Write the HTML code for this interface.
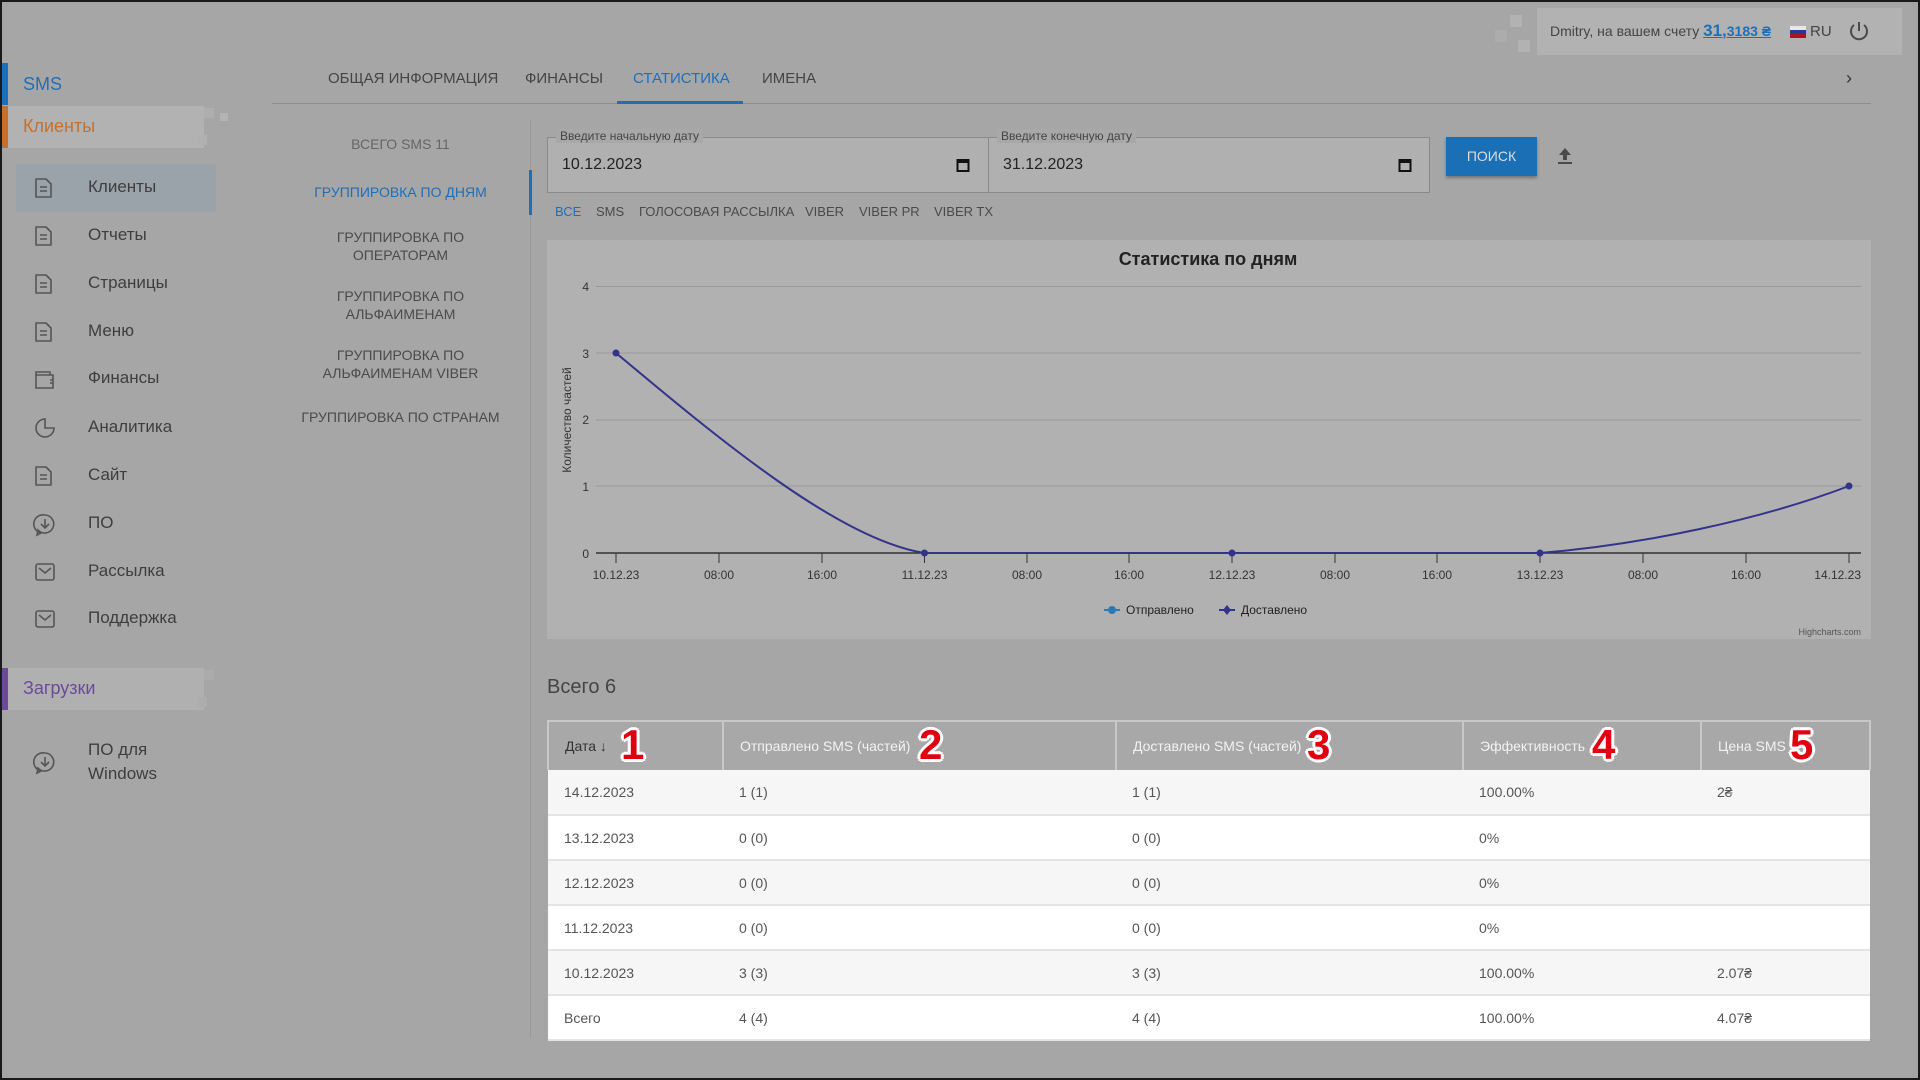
<!DOCTYPE html>
<html><head><meta charset="utf-8"><style>
*{box-sizing:border-box;margin:0;padding:0}
body{width:1920px;height:1080px;background:#a6a6a6;font-family:"Liberation Sans",sans-serif;position:relative;overflow:hidden;color:#444}
.frame{position:absolute;inset:0;border:2px solid #1a1a1a;pointer-events:none;z-index:10}
.a{position:absolute;white-space:nowrap}
.nav{position:absolute;left:88px;font-size:17px;color:#3e3e3e}
.ic{position:absolute;left:33px}
.sub{position:absolute;left:272px;width:257px;text-align:center;font-size:14px;color:#4a4a4a;line-height:18px}
.tab{position:absolute;top:70px;font-size:15px;color:#444}
.ft{position:absolute;top:204px;font-size:13px;color:#4a4a4a}
table{position:absolute;left:547px;top:720px;width:1324px;border-collapse:collapse;font-size:14px}
th{background:#a8a8a8;color:#f2f2f2;font-weight:normal;text-align:left;height:49px;padding-left:16px;border-left:2px solid #c8c8c8;border-top:2px solid #c8c8c8;position:relative}
th:first-child{color:#333;border-left:2px solid #c8c8c8}
th:last-child{border-right:2px solid #c8c8c8}
td{height:45px;padding-left:16px;color:#555;border-bottom:2px solid #e4e4e4}
tr.g td{background:#f6f6f6}
tr.w td{background:#fff}
.n{position:absolute;top:-1px;font-size:42px;font-weight:bold;color:#e00010;text-shadow:2px 0 #fff,-2px 0 #fff,0 2px #fff,0 -2px #fff,2px 2px #fff,-2px -2px #fff,2px -2px #fff,-2px 2px #fff,3px 0 #fff,-3px 0 #fff,0 3px #fff,0 -3px #fff}
</style></head><body>
<div class="frame"></div>

<div class="a" style="left:1537px;top:8px;width:365px;height:47px;background:#b2b2b2"></div>
<div class="a" style="left:1510px;top:15px;width:12px;height:12px;background:#b2b2b2"></div>
<div class="a" style="left:1495px;top:30px;width:12px;height:12px;background:#acacac"></div>
<div class="a" style="left:1518px;top:40px;width:12px;height:12px;background:#b2b2b2"></div>
<div class="a" style="left:1550px;top:21px;font-size:14px;color:#444">Dmitry, на вашем счету <span style="color:#1f6fb8;font-weight:bold;text-decoration:underline"><span style="font-size:17px">31,</span>3183 ₴</span></div>
<div class="a" style="left:1790px;top:26px;width:16px;height:12px;background:linear-gradient(#e8e8e8 33%,#1f3a9a 33% 66%,#b01020 66%)"></div>
<div class="a" style="left:1810px;top:23px;font-size:15px;color:#444">RU</div>
<svg class="a" style="left:1848px;top:20px" width="22" height="22" viewBox="0 0 22 22"><path d="M6 5a8 8 0 1 0 10 0M11 2v9" fill="none" stroke="#4a4a4a" stroke-width="2"/></svg>

<div class="a" style="left:2px;top:63px;width:6px;height:42px;background:#1f6fb8"></div>
<div class="a" style="left:23px;top:74px;font-size:18px;color:#1f6fb8">SMS</div>
<div class="a" style="left:2px;top:106px;width:202px;height:42px;background:#b2b2b2;border-left:6px solid #c6702e"></div>
<div class="a" style="left:204px;top:108px;width:10px;height:10px;background:#aeaeae"></div>
<div class="a" style="left:220px;top:113px;width:8px;height:8px;background:#b4b4b4"></div>
<div class="a" style="left:197px;top:135px;width:10px;height:10px;background:#b0b0b0"></div>
<div class="a" style="left:23px;top:116px;font-size:18px;color:#c6702e">Клиенты</div>
<div class="a" style="left:16px;top:164px;width:200px;height:48px;background:#9aa2aa"></div>

<div class="a" style="left:2px;top:668px;width:202px;height:42px;background:#b0b0b0;border-left:6px solid #6b4a9c"></div>
<div class="a" style="left:204px;top:670px;width:10px;height:10px;background:#ababab"></div>
<div class="a" style="left:197px;top:697px;width:10px;height:10px;background:#adadad"></div>
<div class="a" style="left:23px;top:678px;font-size:18px;color:#6b4a9c">Загрузки</div>

<div class="nav" style="top:177px">Клиенты</div>
<div class="nav" style="top:225px">Отчеты</div>
<div class="nav" style="top:273px">Страницы</div>
<div class="nav" style="top:321px">Меню</div>
<div class="nav" style="top:368px">Финансы</div>
<div class="nav" style="top:417px">Аналитика</div>
<div class="nav" style="top:465px">Сайт</div>
<div class="nav" style="top:513px">ПО</div>
<div class="nav" style="top:561px">Рассылка</div>
<div class="nav" style="top:608px">Поддержка</div>
<div class="nav" style="top:738px;line-height:24px">ПО для<br>Windows</div>

<svg class="ic" style="top:176px" width="22" height="24"><path d="M3 3h10l5 5v13H3z M7 11h7M7 15h7" fill="none" stroke="#555" stroke-width="1.6" stroke-linejoin="round"/></svg>
<svg class="ic" style="top:224px" width="22" height="24"><path d="M3 3h10l5 5v13H3z M7 11h7M7 15h7" fill="none" stroke="#555" stroke-width="1.6" stroke-linejoin="round"/></svg>
<svg class="ic" style="top:272px" width="22" height="24"><path d="M3 3h10l5 5v13H3z M7 11h7M7 15h7" fill="none" stroke="#555" stroke-width="1.6" stroke-linejoin="round"/></svg>
<svg class="ic" style="top:320px" width="22" height="24"><path d="M3 3h10l5 5v13H3z M7 11h7M7 15h7" fill="none" stroke="#555" stroke-width="1.6" stroke-linejoin="round"/></svg>
<svg class="ic" style="top:367px" width="24" height="24"><path d="M3 5h14v3h3v13H3z M3 8h14 M17 13h3v3h-3" fill="none" stroke="#555" stroke-width="1.6"/></svg>
<svg class="ic" style="top:416px" width="24" height="24"><path d="M12 3a9 9 0 1 0 9 9h-9z" fill="none" stroke="#555" stroke-width="1.6"/></svg>
<svg class="ic" style="top:464px" width="22" height="24"><path d="M3 3h10l5 5v13H3z M7 11h7M7 15h7" fill="none" stroke="#555" stroke-width="1.6" stroke-linejoin="round"/></svg>
<svg class="ic" style="top:512px" width="24" height="26"><path d="M12 3a9 9 0 1 1-7 15l-1 5 4-2a9 9 0 0 1 4-18z M12 7v9M8 12l4 4 4-4" fill="none" stroke="#555" stroke-width="1.6"/></svg>
<svg class="ic" style="top:560px" width="24" height="24"><rect x="3" y="4" width="18" height="16" rx="2" fill="none" stroke="#555" stroke-width="1.6"/><path d="M6 8l6 5 6-5" fill="none" stroke="#555" stroke-width="1.6"/></svg>
<svg class="ic" style="top:607px" width="24" height="24"><rect x="3" y="4" width="18" height="16" rx="2" fill="none" stroke="#555" stroke-width="1.6"/><path d="M6 8l6 5 6-5" fill="none" stroke="#555" stroke-width="1.6"/></svg>
<svg class="ic" style="top:750px" width="24" height="26"><path d="M12 3a9 9 0 1 1-7 15l-1 5 4-2a9 9 0 0 1 4-18z M12 7v9M8 12l4 4 4-4" fill="none" stroke="#555" stroke-width="1.6"/></svg>

<div class="tab" style="left:328px">ОБЩАЯ ИНФОРМАЦИЯ</div>
<div class="tab" style="left:525px">ФИНАНСЫ</div>
<div class="tab" style="left:633px;color:#1f6fb8">СТАТИСТИКА</div>
<div class="tab" style="left:762px">ИМЕНА</div>
<div class="a" style="left:272px;top:103px;width:1599px;height:1px;background:#8e8e8e"></div>
<div class="a" style="left:617px;top:101px;width:126px;height:3px;background:#1f6fb8"></div>
<div class="a" style="left:1846px;top:68px;font-size:18px;color:#333">›</div>

<div class="a" style="left:530px;top:120px;width:1px;height:918px;background:#999"></div>
<div class="a" style="left:529px;top:170px;width:3px;height:45px;background:#1f6fb8"></div>
<div class="sub" style="top:135px;color:#666">ВСЕГО SMS 11</div>
<div class="sub" style="top:183px;color:#1f6fb8">ГРУППИРОВКА ПО ДНЯМ</div>
<div class="sub" style="top:228px">ГРУППИРОВКА ПО<br>ОПЕРАТОРАМ</div>
<div class="sub" style="top:287px">ГРУППИРОВКА ПО<br>АЛЬФАИМЕНАМ</div>
<div class="sub" style="top:346px">ГРУППИРОВКА ПО<br>АЛЬФАИМЕНАМ VIBER</div>
<div class="sub" style="top:408px">ГРУППИРОВКА ПО СТРАНАМ</div>

<div class="a" style="left:547px;top:137px;width:442px;height:56px;background:#b0b0b0;border:1.5px solid #8a8a8a"></div>
<div class="a" style="left:988px;top:137px;width:442px;height:56px;background:#b0b0b0;border:1.5px solid #8a8a8a"></div>
<div class="a" style="left:556px;top:129px;font-size:12px;color:#444;background:#a8a8a8;padding:0 4px">Введите начальную дату</div>
<div class="a" style="left:997px;top:129px;font-size:12px;color:#444;background:#a8a8a8;padding:0 4px">Введите конечную дату</div>
<div class="a" style="left:562px;top:156px;font-size:16px;color:#222">10.12.2023</div>
<div class="a" style="left:1003px;top:156px;font-size:16px;color:#222">31.12.2023</div>
<svg class="a" style="left:956px;top:157px" width="14" height="16"><rect x="1.5" y="3" width="11" height="11" fill="none" stroke="#111" stroke-width="2"/><rect x="1" y="2" width="12" height="4" fill="#111"/></svg>
<svg class="a" style="left:1398px;top:157px" width="14" height="16"><rect x="1.5" y="3" width="11" height="11" fill="none" stroke="#111" stroke-width="2"/><rect x="1" y="2" width="12" height="4" fill="#111"/></svg>
<div class="a" style="left:1446px;top:137px;width:91px;height:39px;background:#1a6fb5;box-shadow:0 2px 3px rgba(0,0,0,.3);color:#ddd;font-size:14px;text-align:center;line-height:39px">ПОИСК</div>
<svg class="a" style="left:1556px;top:146px" width="18" height="20"><path d="M9 2l6 7h-4v5H7V9H3z" fill="#4a4a4a"/><rect x="2" y="16" width="14" height="2" fill="#4a4a4a"/></svg>

<div class="ft" style="left:555px;color:#1f6fb8">ВСЕ</div>
<div class="ft" style="left:596px">SMS</div>
<div class="ft" style="left:639px">ГОЛОСОВАЯ РАССЫЛКА</div>
<div class="ft" style="left:805px">VIBER</div>
<div class="ft" style="left:859px">VIBER PR</div>
<div class="ft" style="left:934px">VIBER TX</div>

<svg class="a" style="left:547px;top:240px" width="1324" height="399" viewBox="547 240 1324 399">
<rect x="547" y="240" width="1324" height="399" fill="#b1b1b1"/>
<text x="1208" y="265" text-anchor="middle" font-family="Liberation Sans" font-size="18" font-weight="bold" fill="#222">Статистика по дням</text>
<g stroke="#999" stroke-width="1"><line x1="596" y1="286.5" x2="1861" y2="286.5"/><line x1="596" y1="353" x2="1861" y2="353"/><line x1="596" y1="420" x2="1861" y2="420"/><line x1="596" y1="486" x2="1861" y2="486"/></g>
<line x1="596" y1="553" x2="1861" y2="553" stroke="#333" stroke-width="1.5"/>
<g font-family="Liberation Sans" font-size="12" fill="#333" text-anchor="end"><text x="589" y="291">4</text><text x="589" y="358">3</text><text x="589" y="424">2</text><text x="589" y="491">1</text><text x="589" y="558">0</text></g>
<text transform="translate(571,420) rotate(-90)" text-anchor="middle" font-family="Liberation Sans" font-size="12" fill="#333">Количество частей</text>
<g stroke="#333" stroke-width="1"><line x1="616" y1="553" x2="616" y2="563"/><line x1="719" y1="553" x2="719" y2="563"/><line x1="822" y1="553" x2="822" y2="563"/><line x1="924.5" y1="553" x2="924.5" y2="563"/><line x1="1027" y1="553" x2="1027" y2="563"/><line x1="1129" y1="553" x2="1129" y2="563"/><line x1="1232" y1="553" x2="1232" y2="563"/><line x1="1335" y1="553" x2="1335" y2="563"/><line x1="1437" y1="553" x2="1437" y2="563"/><line x1="1540" y1="553" x2="1540" y2="563"/><line x1="1643" y1="553" x2="1643" y2="563"/><line x1="1746" y1="553" x2="1746" y2="563"/><line x1="1849" y1="553" x2="1849" y2="563"/></g>
<g font-family="Liberation Sans" font-size="12" fill="#333" text-anchor="middle"><text x="616" y="579">10.12.23</text><text x="719" y="579">08:00</text><text x="822" y="579">16:00</text><text x="924.5" y="579">11.12.23</text><text x="1027" y="579">08:00</text><text x="1129" y="579">16:00</text><text x="1232" y="579">12.12.23</text><text x="1335" y="579">08:00</text><text x="1437" y="579">16:00</text><text x="1540" y="579">13.12.23</text><text x="1643" y="579">08:00</text><text x="1746" y="579">16:00</text><text x="1861" y="579" text-anchor="end">14.12.23</text></g>
<path d="M616 353 C720 440 840 540 924.5 553 L1540 553 C1640 545 1760 520 1849 486" fill="none" stroke="#33338a" stroke-width="2"/>
<g fill="#33338a"><circle cx="616" cy="353" r="3.5"/><circle cx="924.5" cy="553" r="3.5"/><circle cx="1232" cy="553" r="3.5"/><circle cx="1540" cy="553" r="3.5"/><circle cx="1849" cy="486" r="3.5"/></g>
<line x1="1104" y1="610" x2="1120" y2="610" stroke="#2a7ab8" stroke-width="2"/><circle cx="1112" cy="610" r="4" fill="#2a7ab8"/>
<text x="1126" y="614" font-family="Liberation Sans" font-size="12" fill="#222">Отправлено</text>
<line x1="1219" y1="610" x2="1235" y2="610" stroke="#33338a" stroke-width="2"/><path d="M1227 605l4 5-4 5-4-5z" fill="#33338a"/>
<text x="1241" y="614" font-family="Liberation Sans" font-size="12" fill="#222">Доставлено</text>
<text x="1861" y="635" text-anchor="end" font-family="Liberation Sans" font-size="9" fill="#555">Highcharts.com</text>
</svg>

<div class="a" style="left:547px;top:676px;font-size:20px;color:#444">Всего 6</div>

<table>
<tr><th style="width:175px">Дата ↓<span class="n" style="left:72px">1</span></th><th style="width:393px">Отправлено SMS (частей)<span class="n" style="left:195px">2</span></th><th style="width:347px">Доставлено SMS (частей)<span class="n" style="left:190px">3</span></th><th style="width:238px">Эффективность<span class="n" style="left:128px">4</span></th><th>Цена SMS<span class="n" style="left:88px">5</span></th></tr>
<tr class="g"><td>14.12.2023</td><td>1 (1)</td><td>1 (1)</td><td>100.00%</td><td>2₴</td></tr>
<tr class="w"><td>13.12.2023</td><td>0 (0)</td><td>0 (0)</td><td>0%</td><td></td></tr>
<tr class="g"><td>12.12.2023</td><td>0 (0)</td><td>0 (0)</td><td>0%</td><td></td></tr>
<tr class="w"><td>11.12.2023</td><td>0 (0)</td><td>0 (0)</td><td>0%</td><td></td></tr>
<tr class="g"><td>10.12.2023</td><td>3 (3)</td><td>3 (3)</td><td>100.00%</td><td>2.07₴</td></tr>
<tr class="w"><td>Всего</td><td>4 (4)</td><td>4 (4)</td><td>100.00%</td><td>4.07₴</td></tr>
</table>
</body></html>
